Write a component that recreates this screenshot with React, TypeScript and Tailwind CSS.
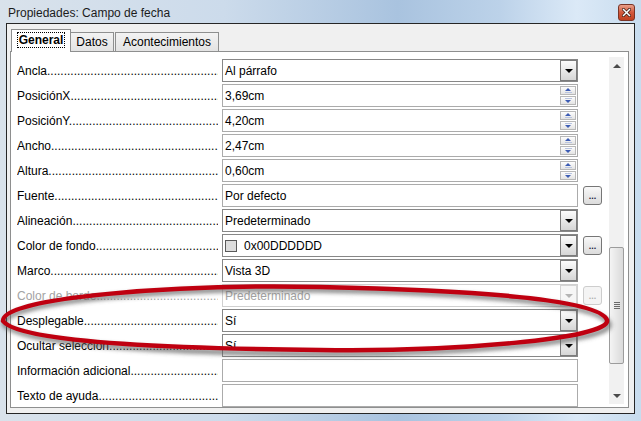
import React from "react";

type Row = {
  label: string;
  kind: "select" | "spin" | "text";
  value?: string;
  swatch?: boolean;
  more?: boolean;
  disabled?: boolean;
};

const ROWS: Row[] = [
  { label: "Ancla", kind: "select", value: "Al párrafo" },
  { label: "PosiciónX", kind: "spin", value: "3,69cm" },
  { label: "PosiciónY", kind: "spin", value: "4,20cm" },
  { label: "Ancho", kind: "spin", value: "2,47cm" },
  { label: "Altura", kind: "spin", value: "0,60cm" },
  { label: "Fuente", kind: "text", value: "Por defecto", more: true },
  { label: "Alineación", kind: "select", value: "Predeterminado" },
  { label: "Color de fondo", kind: "select", value: "0x00DDDDDD", swatch: true, more: true },
  { label: "Marco", kind: "select", value: "Vista 3D" },
  { label: "Color de borde", kind: "select", value: "Predeterminado", more: true, disabled: true },
  { label: "Desplegable", kind: "select", value: "Sí" },
  { label: "Ocultar selección", kind: "select", value: "Sí" },
  { label: "Información adicional", kind: "text" },
  { label: "Texto de ayuda", kind: "text" },
];

function DropArrow({ disabled }: { disabled?: boolean }) {
  return (
    <div
      className={`flex h-full w-[17px] shrink-0 items-center justify-center border ${
        disabled
          ? "border-[#d4d4d4] bg-[#f6f6f6]"
          : "border-[#7c7c7c] bg-[linear-gradient(#fbfbfb,#d6d6d6)]"
      }`}
    >
      <div
        className={`h-0 w-0 border-x-[4px] border-t-[4px] border-x-transparent ${
          disabled ? "border-t-[#b4b4b4]" : "border-t-black"
        }`}
      />
    </div>
  );
}

function SpinButtons() {
  return (
    <div className="flex h-full w-[17px] shrink-0 flex-col gap-px py-px pr-px">
      <div className="flex flex-1 flex-col items-center justify-center gap-px border border-[#b8b8b8] bg-[linear-gradient(#fdfdfd,#e4e4e4)]">
        <div className="h-0 w-0 border-x-[3px] border-b-[3px] border-x-transparent border-b-[#3c5cb4]" />
        <div className="h-px w-[7px] bg-[#b8c4e0]" />
      </div>
      <div className="flex flex-1 flex-col items-center justify-center gap-px border border-[#b8b8b8] bg-[linear-gradient(#fdfdfd,#e4e4e4)]">
        <div className="h-px w-[7px] bg-[#b8c4e0]" />
        <div className="h-0 w-0 border-x-[3px] border-t-[3px] border-x-transparent border-t-[#3c5cb4]" />
      </div>
    </div>
  );
}

function MoreButton({ disabled }: { disabled?: boolean }) {
  return (
    <div
      className={`flex h-[19px] w-[19px] items-end justify-center rounded-[3px] border pb-[3px] text-[9px] font-bold leading-none ${
        disabled
          ? "border-[#cdcdcd] bg-[#f4f4f4] text-[#b0b0b0]"
          : "border-[#767676] bg-[linear-gradient(#f8f8f8,#dcdcdc)] text-[#202040]"
      }`}
    >
      ...
    </div>
  );
}

function PropertyRow({ row }: { row: Row }) {
  const isSelect = row.kind === "select";
  return (
    <div className="flex h-[23px] shrink-0 items-center">
      <div
        className={`w-[201px] overflow-hidden whitespace-nowrap ${
          row.disabled ? "text-[#a3a3a3]" : "text-black"
        }`}
      >
        {row.label}
        {".".repeat(90)}
      </div>
      <div
        className={`ml-[4px] flex h-full w-[356px] items-center border bg-white ${
          row.disabled
            ? "border-[#d0d0d0]"
            : isSelect
            ? "border-[#878787]"
            : "border-[#ababab]"
        }`}
      >
        <div
          className={`flex flex-1 items-center gap-[7px] pl-[2px] ${
            row.disabled ? "text-[#a3a3a3]" : "text-black"
          }`}
        >
          {row.swatch && (
            <div className="h-[12px] w-[12px] border border-[#5a5a5a] bg-[#dddddd]" />
          )}
          <span>{row.value}</span>
        </div>
        {isSelect && <DropArrow disabled={row.disabled} />}
        {row.kind === "spin" && <SpinButtons />}
      </div>
      <div className="ml-[5px] w-[19px]">
        {row.more && <MoreButton disabled={row.disabled} />}
      </div>
    </div>
  );
}

function Scrollbar() {
  return (
    <div className="mb-[3px] mr-[4px] mt-[5px] flex w-[15px] flex-col bg-[#f1f1f1]">
      <div className="flex h-[17px] items-center justify-center">
        <div className="h-0 w-0 border-x-[4px] border-b-[4px] border-x-transparent border-b-[#4a4a4a]" />
      </div>
      <div className="h-[173px]" />
      <div className="flex h-[117px] flex-col items-center justify-center gap-px rounded-[2px] border border-[#9c9c9c] bg-[linear-gradient(90deg,#f4f4f4,#dadada)]">
        <div className="h-px w-[6px] bg-[#6a6a6a]" />
        <div className="h-px w-[6px] bg-[#6a6a6a]" />
        <div className="h-px w-[6px] bg-[#6a6a6a]" />
        <div className="h-px w-[6px] bg-[#6a6a6a]" />
      </div>
      <div className="flex-1" />
      <div className="flex h-[17px] items-center justify-center">
        <div className="h-0 w-0 border-x-[4px] border-t-[4px] border-x-transparent border-t-[#4a4a4a]" />
      </div>
    </div>
  );
}

function CloseButton() {
  return (
    <div className="flex h-[17px] w-[17px] items-center justify-center rounded-[3px] border border-[#7a3426] bg-[linear-gradient(#e9a08a,#d2583c_50%,#c0401f)]">
      <svg width="9" height="9" viewBox="0 0 9 9">
        <path d="M1.5 1.5 L7.5 7.5 M7.5 1.5 L1.5 7.5" stroke="#3a1a12" strokeWidth="3" strokeLinecap="square" />
        <path d="M1.5 1.5 L7.5 7.5 M7.5 1.5 L1.5 7.5" stroke="#ffffff" strokeWidth="1.5" strokeLinecap="square" />
      </svg>
    </div>
  );
}

export default function App() {
  return (
    <div className="relative h-[421px] w-[641px] overflow-hidden bg-[linear-gradient(90deg,#d9e2eb_0%,#ccdbeb_35%,#a9c3df_62%,#bcd2e9_78%,#dbe9f7_90%,#c8dcee_100%)] font-['Liberation_Sans',Arial,sans-serif] text-[12px] text-black">
      <div className="flex h-[23px] items-center justify-between pl-[8px] pr-[6px] pt-[2px]">
        <span className="text-[#1b1b1b]">Propiedades: Campo de fecha</span>
        <CloseButton />
      </div>

      <div className="mx-[6px] flex h-[391px] flex-col border border-[#262626] bg-[#f0f0f0] pb-[5px] pl-[3px] pr-[5px] pt-[5px]">
        <div className="relative z-10 -mb-px ml-px flex h-[23px] items-end">
          <div className="flex h-[23px] w-[60px] items-center justify-center border border-b-0 border-[#8e8f8f] bg-white pb-[2px]">
            <span className="border border-dotted border-black px-[1px] font-bold leading-[14px]">
              General
            </span>
          </div>
          <div className="flex h-[20px] w-[43px] items-center justify-center border border-l-0 border-[#8e8f8f] bg-[linear-gradient(#f3f3f3,#e3e3e3)]">
            Datos
          </div>
          <div className="ml-px flex h-[20px] w-[104px] items-center justify-center border border-[#8e8f8f] bg-[linear-gradient(#f3f3f3,#e3e3e3)]">
            Acontecimientos
          </div>
        </div>

        <div className="flex flex-1 overflow-hidden border border-[#8e8f8f] bg-white">
          <div className="flex flex-1 flex-col gap-[2px] overflow-hidden pl-[6px] pt-[7px]">
            {ROWS.map((row) => (
              <PropertyRow key={row.label} row={row} />
            ))}
          </div>
          <Scrollbar />
        </div>
      </div>

      <svg
        className="pointer-events-none absolute inset-0"
        width="641"
        height="421"
        viewBox="0 0 641 421"
      >
        <defs>
          <filter id="blur" x="-10%" y="-50%" width="120%" height="200%">
            <feGaussianBlur stdDeviation="2.2" />
          </filter>
        </defs>
        <path
          d="M 4 324 C 2 300, 180 287, 320 290 C 470 293, 600 302, 609 324 C 614 342, 450 355, 320 354 C 200 353, 22 347, 4 324 Z"
          fill="none"
          stroke="#5c5c5c"
          strokeOpacity="0.75"
          strokeWidth="5"
          filter="url(#blur)"
        />
        <path
          d="M 3 321 C 1 297, 180 284, 320 287 C 470 290, 600 299, 607 320 C 612 339, 450 352, 320 350 C 200 349, 20 344, 3 321 Z"
          fill="none"
          stroke="#bf0010"
          strokeWidth="4.5"
        />
      </svg>
    </div>
  );
}
